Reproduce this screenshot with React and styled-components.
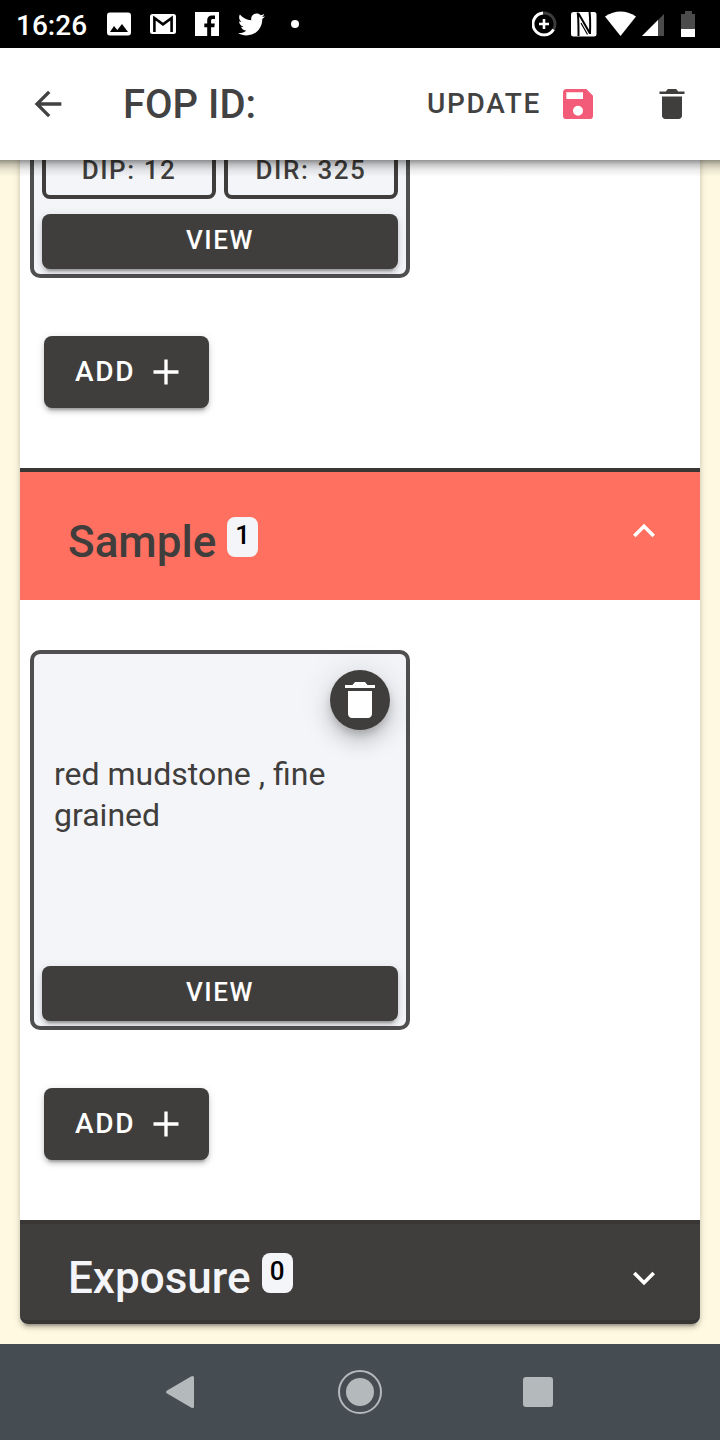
import React from "react";
import styled, { createGlobalStyle } from "styled-components";
import { FaTwitter } from "react-icons/fa";

const Global = createGlobalStyle`
  *, *::before, *::after { box-sizing: border-box; }
  body { margin: 0; font-family: Roboto, "Liberation Sans", sans-serif; color: #403e3c; }
  button { font-family: inherit; border: 0; padding: 0; background: none; color: inherit; }
  svg { display: block; flex: none; }
`;

const elevation = "0 6px 2px -4px rgba(0,0,0,.2), 0 4px 4px rgba(0,0,0,.14), 0 2px 10px rgba(0,0,0,.12)";

const Screen = styled.div`
  width: 720px;
  height: 1440px;
  display: flex;
  flex-direction: column;
  overflow: hidden;
  background: #fff9e1;
`;

const StatusBar = styled.div`
  height: 48px;
  flex: none;
  display: flex;
  align-items: center;
  padding: 0 25px 0 16px;
  background: #000;
  color: #fff;
`;

const Clock = styled.span`
  width: 91px;
  font-size: 28px;
  line-height: 48px;
  font-weight: 500;
  padding-top: 3px;
`;

const Notifications = styled.div`
  display: flex;
  align-items: center;
  flex: 1;
`;

const Indicators = styled.div`
  display: flex;
`;

const AppBar = styled.header`
  position: relative;
  z-index: 2;
  height: 112px;
  flex: none;
  display: flex;
  align-items: center;
  padding: 0 28px;
  background: #fff;

  &::after {
    content: "";
    position: absolute;
    top: 100%;
    left: 0;
    right: 0;
    height: 16px;
    background: linear-gradient(
      rgba(0, 0, 0, 0.42),
      rgba(0, 0, 0, 0.2) 32%,
      rgba(0, 0, 0, 0.08) 62%,
      rgba(0, 0, 0, 0.01)
    );
  }
`;

const Title = styled.h1`
  margin: 2px 0 0 55px;
  flex: 1;
  font-size: 40px;
  font-weight: 500;
  line-height: 48px;
  color: #424242;
`;

const UpdateButton = styled.button`
  display: flex;
  align-items: center;
  gap: 17px;
  margin-right: 54px;
  font-size: 28px;
  font-weight: 500;
  letter-spacing: 0.06em;
  color: #424242;
`;

const Label = styled.span`
  padding-bottom: 2px;
`;

const Viewport = styled.main`
  flex: 1;
  min-height: 0;
  overflow: hidden;
  display: flex;
  flex-direction: column;
  justify-content: flex-end;
  padding: 0 20px 20px;
`;

const Panel = styled.div`
  flex: none;
  border-radius: 8px;
  background: #fff;
  box-shadow: ${elevation};
`;

const SectionBody = styled.div`
  display: flex;
  flex-direction: column;
  align-items: flex-start;
  padding: 50px 10px 60px;
`;

const SectionHeader = styled.div`
  display: flex;
  align-items: center;
  height: ${(p) => (p.$open ? 132 : 104)}px;
  padding: 12px 34px 0 48px;
  border-top: 4px solid #383735;
  border-bottom: ${(p) => (p.$open ? "0" : "4px solid #383634")};
  border-radius: ${(p) => (p.$open ? "0" : "0 0 8px 8px")};
  background: ${(p) => (p.$open ? "#ff7060" : "#403e3c")};
  color: ${(p) => (p.$open ? "#403e3c" : "#f4f5f9")};
`;

const SectionTitle = styled.h2`
  margin: 0;
  font-size: 44px;
  line-height: 56px;
  font-weight: 500;
`;

const Count = styled.span`
  width: 31px;
  height: 40px;
  margin: 0 auto 10px 11px;
  border-radius: 8px;
  background: #f4f5f9;
  color: #000;
  font-size: 26px;
  line-height: 36px;
  font-weight: 500;
  text-align: center;
`;

const Chevron = styled.svg`
  width: 44px;
  height: 44px;
  fill: #fff;
  margin-bottom: ${(p) => (p.$open ? 22 : 0)}px;
`;

const Card = styled.article`
  width: 380px;
  height: 380px;
  display: flex;
  flex-direction: column;
  padding: 16px 8px 5px;
  border: 4px solid #504f4f;
  border-radius: 10px;
  background: #f4f5f9;
`;

const Readings = styled.div`
  display: flex;
  gap: 8px;
  margin: auto 0 15px;
`;

const Reading = styled.div`
  flex: 1;
  height: 55px;
  border: 4px solid #403e3c;
  border-radius: 8px;
  font-size: 26px;
  line-height: 44px;
  font-weight: 500;
  letter-spacing: 0.06em;
  text-align: center;
`;

const Description = styled.p`
  flex: 1;
  margin: 24px 12px 0;
  font-size: 32px;
  line-height: 41px;
`;

const RoundButton = styled.button`
  width: 60px;
  height: 60px;
  align-self: flex-end;
  margin-right: 8px;
  display: grid;
  place-items: center;
  border-radius: 50%;
  background: #403e3c;
  box-shadow: 0 6px 10px -2px rgba(0,0,0,.2), 0 12px 20px rgba(0,0,0,.14), 0 2px 36px rgba(0,0,0,.12);
`;

const ViewButton = styled.button`
  height: 55px;
  flex: none;
  padding-bottom: 3px;
  border-radius: 8px;
  background: #403e3c;
  color: #fff;
  font-size: 26px;
  font-weight: 500;
  letter-spacing: 0.06em;
  box-shadow: ${elevation};
`;

const AddButton = styled.button`
  width: 165px;
  height: 72px;
  margin: 58px 0 0 14px;
  padding-left: 31px;
  display: flex;
  align-items: center;
  gap: 11px;
  border-radius: 8px;
  background: #403e3c;
  color: #fff;
  font-size: 28px;
  font-weight: 500;
  letter-spacing: 0.06em;
  box-shadow: ${elevation};
`;

const NavBar = styled.nav`
  height: 96px;
  flex: none;
  display: flex;
  align-items: center;
  justify-content: space-between;
  padding: 0 158px;
  background: #454d52;
`;

const TrashIcon = ({ size, color }) => (
  <svg width={size} height={size} viewBox="0 0 512 512" fill={color}>
    <path d="M128 405.429C128 428.846 147.198 448 170.667 448h170.667C364.802 448 384 428.846 384 405.429V160H128v245.429zM416 96h-80l-26.785-32H202.786L176 96H96v32h320V96z" />
  </svg>
);

const Add = () => (
  <AddButton>
    <Label>ADD</Label>
    <svg width="40" height="40" viewBox="0 0 512 512" fill="#fff">
      <path d="M416 277.333H277.333V416h-42.666V277.333H96v-42.666h138.667V96h42.666v138.667H416v42.666z" />
    </svg>
  </AddButton>
);

const Section = ({ title, count, open }) => (
  <SectionHeader $open={open}>
    <SectionTitle>{title}</SectionTitle>
    <Count>{count}</Count>
    <Chevron $open={open} viewBox="0 0 24 24">
      <path
        d={
          open
            ? "M7.41 15.41 12 10.83l4.59 4.58L18 14l-6-6-6 6z"
            : "M7.41 8.59 12 13.17l4.59-4.58L18 10l-6 6-6-6z"
        }
      />
    </Chevron>
  </SectionHeader>
);

const NotificationIcons = () => (
  <Notifications>
    <svg width="43" height="48" fill="#fff">
      <path fillRule="evenodd" d="M3 12.500h18a3 3 0 0 1 3 3v17a3 3 0 0 1-3 3H3a3 3 0 0 1-3-3v-17a3 3 0 0 1 3-3zM3 32h18l-6-8-4.700 6-3.300-4z" />
    </svg>
    <svg width="45" height="48">
      <rect x="0" y="14" width="26" height="20" rx="2.500" fill="#fff" />
      <path d="M4.400 32V18L13 24.300 21.600 18V32" fill="none" stroke="#000" strokeWidth="2.600" />
    </svg>
    <svg width="43" height="48">
      <path d="M0 12h24v24H0z" fill="#fff" />
      <path d="M20 15.500h-3c-3 0-4.800 1.800-4.800 4.800v3.200H9.300v3.700h2.900V36h3.900v-8.800h3.200l.5-3.700h-3.700v-2.700c0-1.100.4-1.700 1.800-1.700H20z" fill="#000" />
    </svg>
    <FaTwitter size={27} />
    <svg width="40" height="48">
      <circle cx="30" cy="24" r="4" fill="#fff" />
    </svg>
  </Notifications>
);

const StatusIndicators = () => (
  <Indicators>
    <svg width="39" height="48" fill="none">
      <circle cx="12" cy="24" r="11" stroke="#3c3c3c" strokeWidth="2.800" />
      <path d="M11 13A11 11 0 1 0 21.500 29.500" stroke="#fff" strokeWidth="2.800" />
      <path d="M12 19v10M7 24h10" stroke="#fff" strokeWidth="2.600" />
    </svg>
    <svg width="34" height="48" fill="none">
      <rect x="0" y="12" width="25.500" height="24.500" rx="2.500" fill="#fff" />
      <path d="M6.500 12.500Q7.500 15 7.500 36M18.500 12Q19.500 18 19 34M7.500 13.500L19 33.500" stroke="#000" strokeWidth="2" />
      <path d="M10 23L16.500 34.500" stroke="#000" strokeWidth="1.200" />
    </svg>
    <svg width="37" height="48" fill="#fff">
      <path d="M0 16.500Q15.500 6.500 31 16.500L15.500 36z" />
    </svg>
    <svg width="39" height="48">
      <path d="M22 14v22H0z" fill="#4b4b4b" />
      <path d="M16 20v16H0z" fill="#fff" />
    </svg>
    <svg width="14" height="48">
      <path d="M4 11h7v3h3v15H0V14h4z" fill="#4b4b4b" />
      <path d="M0 29h14v8H0z" fill="#fff" />
    </svg>
  </Indicators>
);

export default function App() {
  return (
    <Screen>
      <Global />
      <StatusBar>
        <Clock>16:26</Clock>
        <NotificationIcons />
        <StatusIndicators />
      </StatusBar>
      <AppBar>
        <svg width="40" height="40" viewBox="0 0 512 512" fill="#424242">
          <path d="M427 234.625H167.296l119.702-119.702L256 85 85 256l171 171 29.922-29.924-118.626-119.701H427v-42.750z" />
        </svg>
        <Title>FOP ID:</Title>
        <UpdateButton>
          <Label>UPDATE</Label>
          <svg width="40" height="40" viewBox="0 0 24 24" fill="#f25c78">
            <path d="M15 9H5V5h10M12 19a3 3 0 0 1-3-3 3 3 0 0 1 3-3 3 3 0 0 1 3 3 3 3 0 0 1-3 3M17 3H5c-1.110 0-2 .9-2 2v14a2 2 0 0 0 2 2h14a2 2 0 0 0 2-2V7z" />
          </svg>
        </UpdateButton>
        <TrashIcon size={40} color="#403e3c" />
      </AppBar>
      <Viewport>
        <Panel>
          <SectionBody>
            <Card>
              <Readings>
                <Reading>DIP: 12</Reading>
                <Reading>DIR: 325</Reading>
              </Readings>
              <ViewButton>VIEW</ViewButton>
            </Card>
            <Add />
          </SectionBody>
          <Section title="Sample" count={1} open />
          <SectionBody>
            <Card>
              <RoundButton>
                <TrashIcon size={48} color="#fff" />
              </RoundButton>
              <Description>red mudstone , fine grained</Description>
              <ViewButton>VIEW</ViewButton>
            </Card>
            <Add />
          </SectionBody>
          <Section title="Exposure" count={0} />
        </Panel>
      </Viewport>
      <NavBar>
        <svg width="44" height="48" fill="#b4b9bb">
          <path d="M9.500 22.200L33 8.400Q36 7 36 9.500V38.500Q36 41 33 39.600L9.500 25.800Q6.500 24 9.500 22.200z" />
        </svg>
        <svg width="44" height="44" fill="#b4b9bb">
          <circle cx="22" cy="22" r="21" fill="none" stroke="#b4b9bb" strokeWidth="2" />
          <circle cx="22" cy="22" r="14" />
        </svg>
        <svg width="44" height="44" fill="#b4b9bb">
          <rect x="5" y="7" width="30" height="30" rx="3" />
        </svg>
      </NavBar>
    </Screen>
  );
}
